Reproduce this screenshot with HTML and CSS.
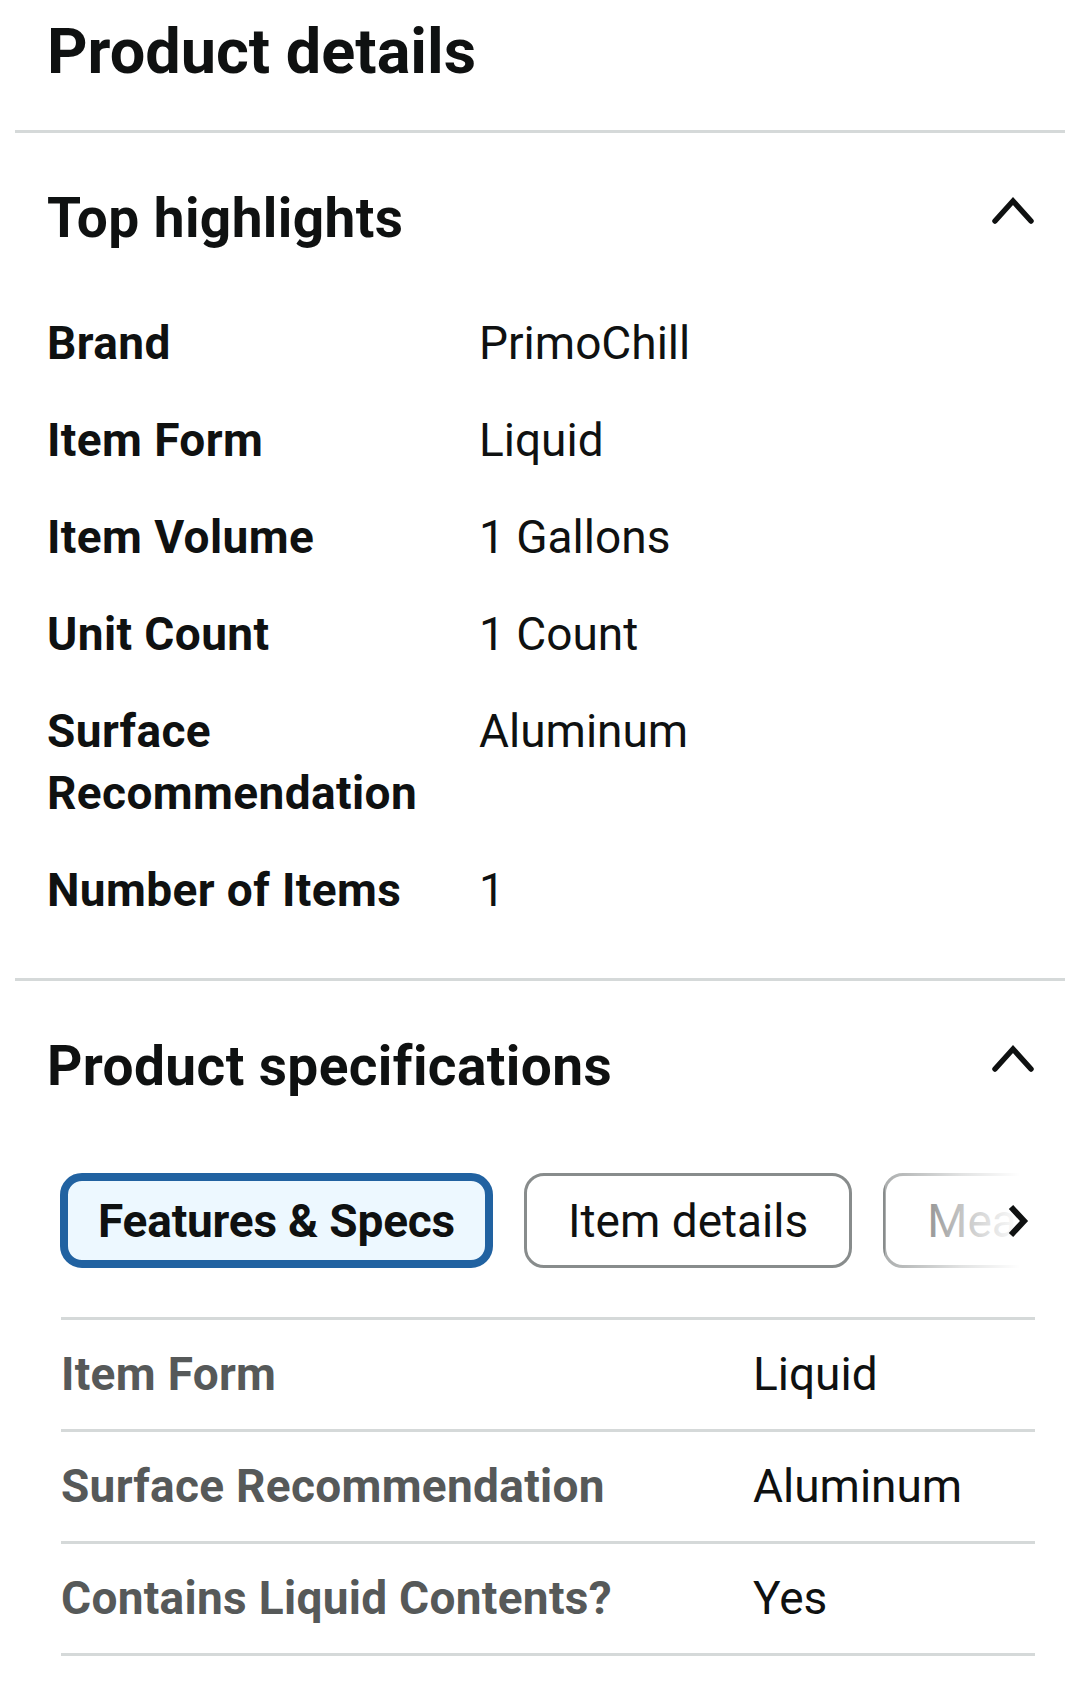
FILE: index.html
```html
<!DOCTYPE html>
<html lang="en">
<head>
<meta charset="utf-8">
<title>Product details</title>
<link rel="stylesheet" href="styles.css">
</head>
<body>
<main class="page">
  <h1 class="title">Product details</h1>
  <hr class="divider">

  <section class="section">
    <div class="section-head">
      <h2 class="section-title">Top highlights</h2>
      <svg class="chev-up" width="44" height="30" viewBox="0 0 44 30" aria-hidden="true"><path d="M4 26 L22 6 L40 26" fill="none" stroke="#0f1111" stroke-width="5.5" stroke-linecap="round" stroke-linejoin="miter"/></svg>
    </div>
    <dl class="highlights">
      <div class="hl-row"><dt>Brand</dt><dd>PrimoChill</dd></div>
      <div class="hl-row"><dt>Item Form</dt><dd>Liquid</dd></div>
      <div class="hl-row"><dt>Item Volume</dt><dd>1 Gallons</dd></div>
      <div class="hl-row"><dt>Unit Count</dt><dd>1 Count</dd></div>
      <div class="hl-row"><dt>Surface Recommendation</dt><dd>Aluminum</dd></div>
      <div class="hl-row"><dt>Number of Items</dt><dd>1</dd></div>
    </dl>
  </section>

  <hr class="divider divider-2">

  <section class="section">
    <div class="section-head">
      <h2 class="section-title">Product specifications</h2>
      <svg class="chev-up" width="44" height="30" viewBox="0 0 44 30" aria-hidden="true"><path d="M4 26 L22 6 L40 26" fill="none" stroke="#0f1111" stroke-width="5.5" stroke-linecap="round" stroke-linejoin="miter"/></svg>
    </div>

    <div class="tabs-wrap">
      <div class="tabs">
        <div class="tab tab-selected">Features &amp; Specs</div>
        <div class="tab">Item details</div>
        <div class="tab">Measurements</div>
      </div>
      <div class="tabs-fade"></div>
      <svg class="tabs-next" width="24" height="36" viewBox="0 0 24 36" aria-hidden="true"><path d="M5 4 L18 18 L5 32" fill="none" stroke="#0f1111" stroke-width="6" stroke-linecap="butt" stroke-linejoin="miter"/></svg>
    </div>

    <div class="spec-table">
      <div class="spec-row"><div class="spec-label">Item Form</div><div class="spec-value">Liquid</div></div>
      <div class="spec-row"><div class="spec-label">Surface Recommendation</div><div class="spec-value">Aluminum</div></div>
      <div class="spec-row"><div class="spec-label">Contains Liquid Contents?</div><div class="spec-value">Yes</div></div>
    </div>
  </section>
</main>
</body>
</html>
```

FILE: styles.css
```css
html, body {
  margin: 0;
  padding: 0;
  background: #ffffff;
}

body {
  font-family: Roboto, "Liberation Sans", Arial, sans-serif;
  color: #0f1111;
  width: 1080px;
}

.page {
  padding: 0 15px;
}

.title {
  margin: 0;
  padding: 14px 32px 0;
  font-size: 63px;
  line-height: 76px;
  font-weight: 700;
  letter-spacing: 0;
}

.divider {
  display: block;
  border: 0;
  height: 3px;
  background: #d5d9d9;
  margin: 40px 0 0;
}

.divider-2 {
  margin-top: 57px;
}

.section {
  padding: 0 31px 0 32px;
}

.section-head {
  display: flex;
  justify-content: space-between;
  align-items: flex-start;
  margin-top: 53px;
}

.section-title {
  margin: 0;
  font-size: 55px;
  line-height: 64px;
  font-weight: 700;
  letter-spacing: 0.4px;
}

.chev-up {
  display: block;
  margin-top: 9px;
  margin-right: -1px;
  flex: none;
}

.highlights {
  margin: 62px 0 0;
  display: grid;
  row-gap: 35px;
}

.hl-row {
  display: grid;
  grid-template-columns: 432px 1fr;
}

.hl-row dt {
  font-size: 46px;
  line-height: 62px;
  font-weight: 700;
  letter-spacing: 0.4px;
}

.hl-row dd {
  margin: 0;
  font-size: 46px;
  line-height: 62px;
  font-weight: 400;
}

.tabs-wrap {
  position: relative;
  overflow: hidden;
  margin: 75px -1px 0 13px;
}

.tabs {
  display: flex;
  gap: 31px;
}

.tab {
  flex: none;
  box-sizing: border-box;
  height: 95px;
  display: flex;
  align-items: center;
  padding: 0 41px;
  border: 3px solid #888c8c;
  border-radius: 20px;
  background: #ffffff;
  font-size: 46px;
  font-weight: 400;
  color: #0f1111;
  white-space: nowrap;
}

.tab-selected {
  border: 8px solid #2162a1;
  border-radius: 22px;
  background: #edf8ff;
  padding: 0 30px 0 30px;
  font-weight: 700;
  letter-spacing: -0.2px;
}

.tabs-fade {
  position: absolute;
  top: 0;
  right: 0;
  bottom: 0;
  width: 150px;
  background: linear-gradient(to right, rgba(255, 255, 255, 0.3) 0%, rgba(255, 255, 255, 0.75) 50%, #ffffff 90%);
}

.tabs-next {
  position: absolute;
  right: 5px;
  top: 30px;
}

.spec-table {
  margin: 49px -1px 0 14px;
  border-top: 3px solid #d5d9d9;
}

.spec-row {
  display: grid;
  grid-template-columns: 692px 1fr;
  padding: 23px 0 24px;
  border-bottom: 3px solid #d5d9d9;
  font-size: 46px;
  line-height: 62px;
}

.spec-label {
  font-weight: 700;
  color: #565959;
  letter-spacing: 0.3px;
}

.spec-value {
  font-weight: 400;
  color: #0f1111;
}
```
